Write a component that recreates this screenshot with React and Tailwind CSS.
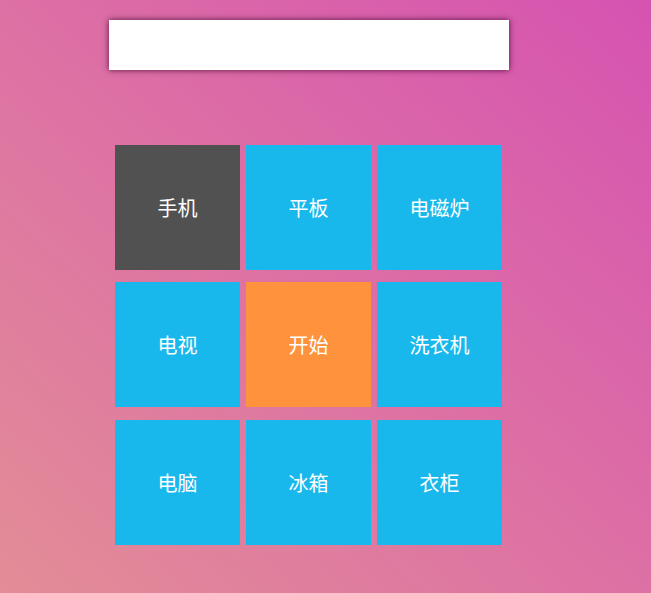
export default function App() {
    const rows = [
        [
            { name: '手机', color: 'bg-[#515151]' },
            { name: '平板', color: 'bg-[#19b8ec]' },
            { name: '电磁炉', color: 'bg-[#19b8ec]' },
        ],
        [
            { name: '电视', color: 'bg-[#19b8ec]' },
            { name: '开始', color: 'bg-[#ff923c]' },
            { name: '洗衣机', color: 'bg-[#19b8ec]' },
        ],
        [
            { name: '电脑', color: 'bg-[#19b8ec]' },
            { name: '冰箱', color: 'bg-[#19b8ec]' },
            { name: '衣柜', color: 'bg-[#19b8ec]' },
        ],
    ];

    return (
        <div
            className="w-[651px] h-[593px] overflow-hidden bg-[linear-gradient(to_top_right,#e38d97,#d653b1)]"
            style={{ fontFamily: '"Microsoft YaHei", "Noto Sans CJK SC", sans-serif' }}
        >
            {/* 输入框 */}
            <div className="pt-[20px] pl-[109px]">
                <input
                    type="text"
                    className="w-[400px] h-[50px] bg-white outline-none shadow-[0_0_6px_rgba(60,0,40,0.85)]"
                />
            </div>

            {/* 九宫格 */}
            <div className="mt-[75px] ml-[115px] flex flex-col">
                {rows.map((row, i) => (
                    <div key={i} className={`flex gap-x-[6px] ${i === 1 ? 'mt-[12px]' : ''} ${i === 2 ? 'mt-[13px]' : ''}`}>
                        {row.map((item) => (
                            <div
                                key={item.name}
                                className={`${item.color} w-[125px] h-[125px] flex items-center justify-center text-white text-[20px]`}
                            >
                                {item.name}
                            </div>
                        ))}
                    </div>
                ))}
            </div>
        </div>
    );
}
